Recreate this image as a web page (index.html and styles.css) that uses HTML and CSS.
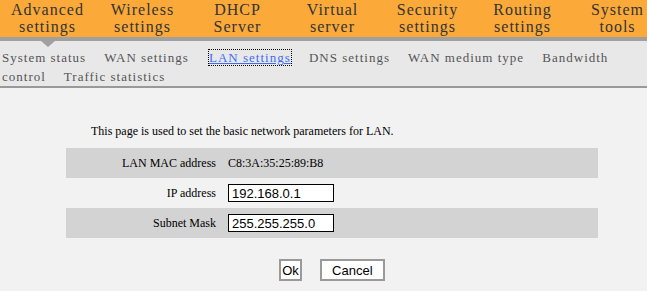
FILE: index.html
```html
<!DOCTYPE html>
<html lang="en">
<head>
    <meta charset="UTF-8">
    <title>LAN settings</title>
    <link rel="stylesheet" href="styles.css">
</head>
<body>
    <div class="menu">
        <div class="menu-item active">Advanced<br>settings</div>
        <div class="menu-item">Wireless<br>settings</div>
        <div class="menu-item">DHCP<br>Server</div>
        <div class="menu-item">Virtual<br>server</div>
        <div class="menu-item">Security<br>settings</div>
        <div class="menu-item">Routing<br>settings</div>
        <div class="menu-item">System<br>tools</div>
    </div>
    <div class="menu-line"><span class="arrow"></span></div>

    <div class="submenu">
        <a class="sub">System status</a>
        <a class="sub">WAN settings</a>
        <a class="sub current">LAN settings</a>
        <a class="sub">DNS settings</a>
        <a class="sub">WAN medium type</a>
        <a class="sub">Bandwidth control</a>
        <a class="sub">Traffic statistics</a>
    </div>

    <div class="content">
        <p class="intro">This page is used to set the basic network parameters for LAN.</p>
        <table class="settings">
            <tr class="shade">
                <td class="label">LAN MAC address</td>
                <td class="value">C8:3A:35:25:89:B8</td>
            </tr>
            <tr>
                <td class="label">IP address</td>
                <td class="value"><input type="text" value="192.168.0.1"></td>
            </tr>
            <tr class="shade">
                <td class="label">Subnet Mask</td>
                <td class="value"><input type="text" value="255.255.255.0"></td>
            </tr>
        </table>
        <div class="buttons">
            <button class="btn">Ok</button>
            <button class="btn cancel">Cancel</button>
        </div>
    </div>
</body>
</html>
```

FILE: styles.css
```css
body {
    margin: 0;
    font-family: "Liberation Serif", "Times New Roman", serif;
    background: #f2f2f2;
    overflow: hidden;
}
.menu {
    display: flex;
    height: 37px;
    background: #fbaa3a;
    overflow: hidden;
}
.menu-item {
    flex: 0 0 95px;
    padding-top: 1px;
    text-align: center;
    font-size: 16px;
    line-height: 17px;
    letter-spacing: 1px;
    color: #333;
}
.menu-line {
    position: relative;
    height: 4px;
    background: #a0a0a0;
}
.arrow {
    position: absolute;
    left: 41px;
    top: 4px;
    border-top: 6px solid #a0a0a0;
    border-left: 7px solid transparent;
    border-right: 7px solid transparent;
}
.submenu {
    height: 38px;
    padding: 7px 0 0 2px;
    background: #e8e8e8;
    border-bottom: 2px solid #999;
    font-size: 13px;
    line-height: 19px;
    letter-spacing: 1px;
    color: #555;
}
.sub {
    margin-right: 14px;
}
.sub.current {
    margin-left: 2px;
    color: #3f6cf5;
    text-decoration: underline;
    outline: 1px dotted #000;
}
.content {
    padding-top: 36px;
}
.intro {
    margin: 0 0 10px 91px;
    font-size: 12px;
    line-height: 14px;
}
.settings {
    margin-left: 66px;
    width: 532px;
    border-collapse: collapse;
    font-size: 12px;
}
.settings td {
    height: 30px;
    padding: 0;
}
.settings .shade {
    background: #d3d3d3;
}
.settings .label {
    width: 150px;
    text-align: right;
}
.settings .value {
    padding-left: 12px;
}
.settings input {
    box-sizing: border-box;
    width: 106px;
    height: 18px;
    margin: 0;
    padding: 0 3px;
    border: 1px solid #000;
    font-family: "Liberation Sans", Arial, sans-serif;
    font-size: 13px;
}
.buttons {
    width: 532px;
    margin: 21px 0 0 66px;
    display: flex;
    justify-content: center;
    gap: 18px;
}
.btn {
    height: 22px;
    padding: 0 1px;
    background: #fff;
    border: 2px solid #9a9a9a;
    font-family: "Liberation Sans", Arial, sans-serif;
    font-size: 13px;
    color: #000;
}
.btn.cancel {
    width: 65px;
}
```
